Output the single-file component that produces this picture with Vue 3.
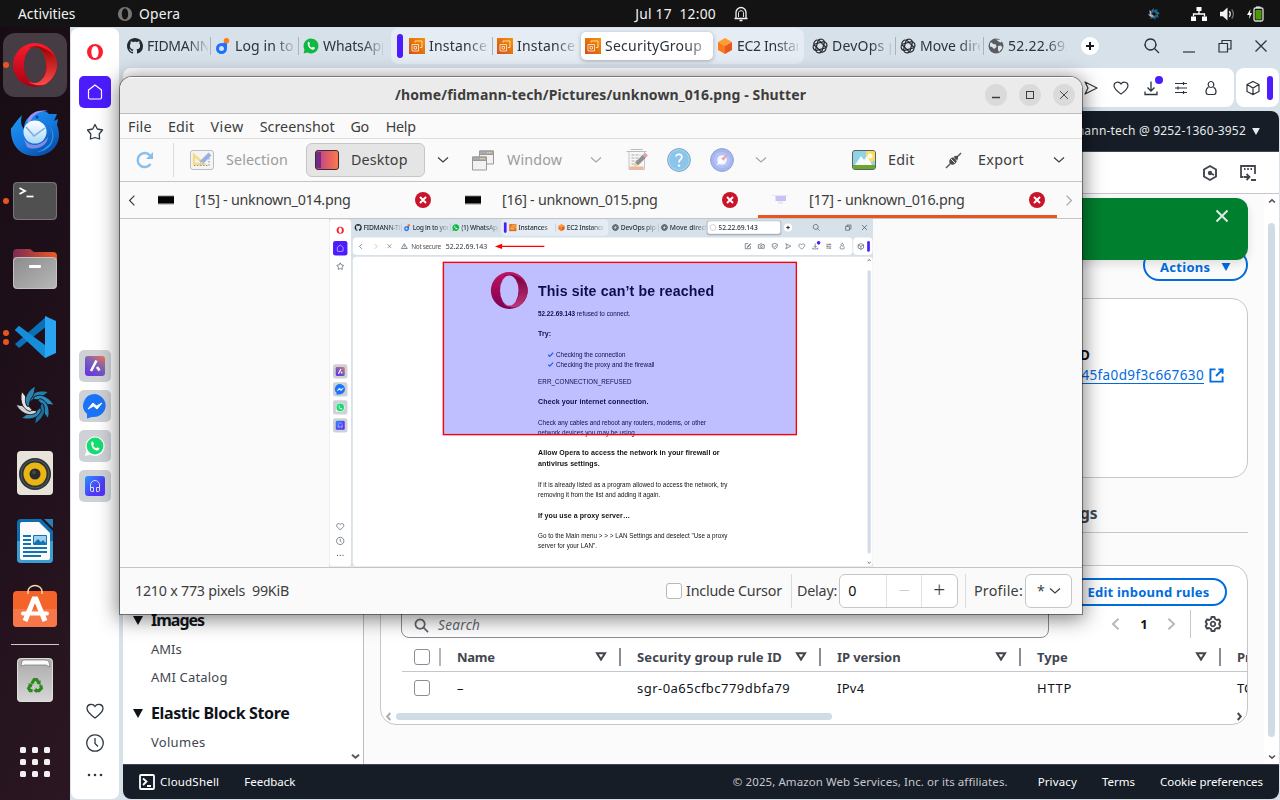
<script setup>
import { h } from 'vue'

// Adjusts tracking so a label occupies the given width in pixels.
const vFit = {
  mounted(el, { value }) {
    const n = el.textContent.trim().length
    el.style.letterSpacing = (value - el.offsetWidth) / n + 'px'
  }
}

const line = (d, w = 1.3, extra = '') =>
  `<path d="${d}" fill="none" stroke="currentColor" stroke-width="${w}" ${extra}/>`

const blade = 'M-8-6C-6-13 1-20 17-16.500C13-13.500 10.500-11 6.500-9.800C1-9-3-7.500-6-3.500Z'
const bladeFill = ['#1f81ad', '#2b8fbd', '#2385b2', '#1a6f9b', '#2e8ab4', '#cfd1d4', '#e2e3e5', '#2b83ad']
const blades = bladeFill.map((c, i) =>
  `<path d="${blade}" transform="translate(24 24) rotate(${i * 45}) scale(.88)" fill="${c}" stroke="#1c0f18" stroke-width="1.100"/>`).join('')

const petals = [0, 60, 120].map(a =>
  `<rect x="4.700" y="1" width="6.600" height="14" rx="3.300" transform="rotate(${a + 15} 8 8)" fill="none" stroke="#26282c" stroke-width="1.200"/>`).join('')

const icons = {
  operaBig: ['0 0 44 44', `<defs><linearGradient id="oa" x2="0" y2="1"><stop stop-color="#ff1b2d"/><stop offset="1" stop-color="#a70014"/></linearGradient><linearGradient id="ob" x2="0" y2="1"><stop stop-color="#9c0000"/><stop offset="1" stop-color="#ff4b4b"/></linearGradient></defs><circle cx="22" cy="22" r="22" fill="url(#oa)"/><path d="M14.7 5.8C17.8 3 24 2 30 5C40 9 44 15 44 22C44 29 40 36 33 41C26 44 18 41 14.7 38.2C22 42 34 38 34 22C34 7 22 1.500 14.700 5.800Z" fill="url(#ob)"/><ellipse cx="22" cy="22" rx="11" ry="18" fill="var(--hole,#463c44)"/>`],
  opera: ['0 0 18 18', '<path fill-rule="evenodd" fill="currentColor" d="M9 1a8 8 0 1 0 0 16A8 8 0 1 0 9 1ZM9 2.900C11.400 2.900 12.600 5.800 12.600 9S11.400 15.100 9 15.100S5.400 12.200 5.400 9S6.600 2.900 9 2.900Z"/>'],
  thunderbird: ['0 0 48 48', `<defs><linearGradient id="ta" x2="0.700" y2="1"><stop stop-color="#1f9bf5"/><stop offset=".6" stop-color="#1577dc"/><stop offset="1" stop-color="#0a4ea8"/></linearGradient><linearGradient id="tb" x2="0" y2="1"><stop stop-color="#fff"/><stop offset="1" stop-color="#a9d8fb"/></linearGradient></defs><path d="M11 6C3 14 1 20 0 19C-1 37 10 47 24 47C39 47 48 37 48 26C48 20 46 16 46 16L47 10L43 12L46 5L38 5C35 1 24 0 18 8C14 11 13 16 13 20C9 16 10 9 11 6Z" fill="url(#ta)"/><path d="M16 13C18 5 26 0 37 2C28 2 20 6 19 15Z" fill="#a58cf0"/><path d="M35 38C42 34 43 25 39 17C47 27 41 43 25 43C29 42 32 41 35 38Z" fill="#2b97ee"/><path d="M12 27C14 35 26 42 37 28C36 38 24 42 16 38Z" fill="#7d8de8"/><circle cx="24" cy="23" r="11.500" fill="url(#tb)"/><path d="M15 18L23 27L34 19" fill="none" stroke="#79a9df" stroke-width="1.500"/><circle cx="26" cy="8" r="1.500" fill="#0b3d91"/>`],
  terminal: ['0 0 44 38', '<rect width="44" height="38" rx="4" fill="#505050"/><rect x=".5" y=".5" width="43" height="37" rx="4" fill="none" stroke="#777"/><path d="M6.500 6L12 9L6.500 12" fill="none" stroke="#fff" stroke-width="1.800"/><path d="M13.500 14.500H20.500" stroke="#fff" stroke-width="1.700"/>'],
  files: ['0 0 44 40', '<defs><linearGradient id="fa"><stop stop-color="#7b2a55"/><stop offset="1" stop-color="#ef5a21"/></linearGradient><linearGradient id="fb" x2="1" y2="1"><stop stop-color="#8b8b8b"/><stop offset="1" stop-color="#b8b8b8"/></linearGradient></defs><path d="M0 4Q0 0 4 0H17L21 3H40Q44 3 44 7V20H0Z" fill="url(#fa)"/><rect y="8" width="44" height="32" rx="4" fill="url(#fb)"/><rect x=".5" y="8.500" width="43" height="31" rx="4" fill="none" stroke="#c2c2c2"/><rect x="16" y="16" width="12" height="3" rx="1" fill="#fff"/>'],
  vscode: ['0 0 42 42', '<path d="M1 14L5 10L33 32V42L1 14Z" fill="#1287d3"/><path d="M1 28L5 32L33 10V0L1 28Z" fill="#0b70b8"/><path d="M1 14L5 10L31 29V42L1 14Z" fill="#168dd8"/><path d="M31 0L42 5V37L31 42Z" fill="#29a5f3"/>'],
  shutter: ['0 0 48 48', blades],
  rhythm: ['0 0 36 44', '<rect width="36" height="44" rx="4" fill="#e7e3d8"/><circle cx="18" cy="23" r="16" fill="#2e3436"/><circle cx="18" cy="23" r="14" fill="none" stroke="#555b66"/><circle cx="18" cy="23" r="11.500" fill="#eab616"/><circle cx="18" cy="23" r="5.500" fill="#2a2b2d"/><circle cx="17" cy="21.500" r="2" fill="#45474a"/>'],
  writer: ['0 0 36 44', '<path d="M4 0H24L36 12V40Q36 44 32 44H4Q0 44 0 40V4Q0 0 4 0Z" fill="#0c6eae"/><path d="M0 22H36V40Q36 44 32 44H4Q0 44 0 40Z" fill="#3a9ed1"/><path d="M27 0H36V9Z" fill="#2780b8"/><path d="M5 3H22L33 14V39Q33 41 31 41H5Q3 41 3 39V5Q3 3 5 3Z" fill="#fbfbfb"/><path d="M6 17H14M6 21H14M6 25H14M6 29H30M6 33H30M6 37H24" stroke="#1473b5" stroke-width="1.800"/><rect x="16" y="16" width="14" height="10" rx="1" fill="#1473b5"/><path d="M17 24L21 20L24 23L26 21L29 24V17H17Z" fill="#9fd0ee"/>'],
  software: ['0 0 44 48', '<rect y="6" width="44" height="36" rx="4" fill="#f4632a"/><path d="M0 24H44V38Q44 42 40 42H4Q0 42 0 38Z" fill="#f6774a"/><path d="M12 36L21 14H23L32 36" fill="none" stroke="#fff" stroke-width="5"/><path d="M10 28.500H34" stroke="#fff" stroke-width="4" stroke-linecap="round"/><path d="M15 9V6.500A7 6 0 0 1 29 6.500V9" fill="none" stroke="#f3d9a4" stroke-width="1.500"/>'],
  trash: ['0 0 36 44', '<defs><linearGradient id="tr" x2="0" y2="1"><stop stop-color="#a9a9a9"/><stop offset="1" stop-color="#d7d7d7"/></linearGradient></defs><rect width="36" height="44" rx="4" fill="url(#tr)"/><rect x=".5" y=".5" width="35" height="43" rx="4" fill="none" stroke="#ddd"/><path d="M4 8L5 3Q6 2 8 2H28Q31 2 32 4L33 9L29 7H8Z" fill="#fafafa" stroke="#777" stroke-width=".7"/><g transform="translate(3.600 4.700) scale(.8)"><g fill="none" stroke="#2c8a1c" stroke-width="4"><path d="M14 26L17 21H20L23 25M25 28L26 32L23 35H19M15 35H12L10 32L12 28"/></g><path d="M25 22L25 28L20 26ZM20 31V38L16 35ZM9 26L15 26L14 31Z" fill="#2c8a1c"/></g>'],
  apps: ['0 0 30 30', [0, 12, 24].map(y => [0, 12, 24].map(x => `<rect x="${x}" y="${y}" width="6" height="6" rx="1.500" fill="#f3f0f2"/>`).join('')).join('')],
  home: ['0 0 32 32', '<rect width="32" height="32" rx="5" fill="#4c1cff"/><path d="M9.500 14L16 9L22.500 14V21.500Q22.500 23 21 23H11Q9.500 23 9.500 21.500Z" fill="none" stroke="#fff" stroke-width="1.200" stroke-linejoin="round"/>'],
  star: ['0 0 18 18', line('M9 1.500L11.300 6L16.500 7L13.200 11L13.600 16L9 14.500L4.400 16L4.800 11L1.500 7L6.700 6Z', 1.3, 'stroke-linejoin="round"')],
  heart: ['0 0 18 16', line('M9 15C3.500 11 1 8.500 1 5.500C1 1 7 0 9 3.500C11 0 17 1 17 5.500C17 8.500 14.500 11 9 15Z')],
  clock: ['0 0 18 18', line('M9 .8A8.200 8.200 0 1 1 8.990 .8M9 4V9.500L12 12.500')],
  dots: ['0 0 18 4', '<g fill="currentColor"><circle cx="3" cy="2" r="1.300"/><circle cx="9" cy="2" r="1.300"/><circle cx="15" cy="2" r="1.300"/></g>'],
  aria: ['0 0 32 32', '<defs><linearGradient id="ar" x1="1" x2="0.300" y2="1"><stop stop-color="#ff704d"/><stop offset=".5" stop-color="#7a62b8"/><stop offset="1" stop-color="#6a37e0"/></linearGradient></defs><rect width="32" height="32" rx="5" fill="#ced2d6"/><rect x="6" y="6" width="20" height="20" rx="3" fill="url(#ar)"/><path d="M12 21L17.500 10.500M18 17L20.500 20.500" stroke="#fff" stroke-width="2.600" fill="none"/>'],
  messenger: ['0 0 32 32', '<rect width="32" height="32" rx="5" fill="#ced2d6"/><path d="M16 4A12 11.500 0 1 1 13 27L8 28.500V24A12 11.500 0 0 1 16 4Z" fill="#1b74f7"/><path d="M9 19L14 13L17.500 16L23 13L18 19L14.500 16Z" fill="#fff" stroke="#fff"/>'],
  whatsappTile: ['0 0 32 32', '<rect width="32" height="32" rx="5" fill="#ced2d6"/><path d="M16 6.500A9.700 9.700 0 1 1 11 24.500L6 26L7.500 20.500A9.700 9.700 0 0 1 16 6.500Z" fill="#fff"/><circle cx="16" cy="16" r="8.400" fill="#17dc6f"/><path d="M12.200 12.500Q13 10.800 14.400 12.400L15 14L14 15.500Q15.200 17.800 17.300 18.300L18.500 17.200L20.500 18.400Q20 21 17 20.500Q12 18.500 12.200 12.500Z" fill="#fff"/>'],
  player: ['0 0 32 32', '<defs><linearGradient id="pl" x2="1" y2="1"><stop stop-color="#2794ff"/><stop offset=".6" stop-color="#4e3cf8"/><stop offset="1" stop-color="#5530f5"/></linearGradient></defs><rect width="32" height="32" rx="5" fill="#ced2d6"/><rect x="6" y="6" width="20" height="20" rx="3" fill="url(#pl)"/><path d="M11.500 20V15A4.500 4.500 0 0 1 20.500 15V20M14.500 17.500V21.500H12.500Q11.500 21.500 11.500 20V17.500ZM17.500 17.500V21.500H19.500Q20.500 21.500 20.500 20V17.500Z" fill="none" stroke="#d5dcff"/>'],
  github: ['0 0 16 16', '<path fill="#24292f" d="M8 0C3.580 0 0 3.580 0 8c0 3.540 2.290 6.530 5.470 7.590.4.070.55-.17.55-.38 0-.19-.01-.82-.01-1.490-2.010.37-2.530-.49-2.690-.94-.09-.23-.48-.94-.82-1.130-.28-.15-.68-.52-.01-.53.63-.01 1.080.58 1.230.82.720 1.210 1.870.87 2.330.66.070-.52.280-.87.510-1.070-1.780-.2-3.640-.89-3.640-3.950 0-.87.310-1.590.82-2.150-.08-.2-.36-1.020.08-2.120 0 0 .67-.21 2.200.82.640-.18 1.320-.27 2-.27s1.360.09 2 .27c1.530-1.040 2.200-.82 2.200-.82.44 1.100.16 1.920.08 2.120.51.560.82 1.270.82 2.150 0 3.070-1.870 3.750-3.650 3.950.29.250.54.730.54 1.480 0 1.070-.01 1.930-.01 2.200 0 .21.15.46.55.38A8.010 8.010 0 0 0 16 8c0-4.420-3.580-8-8-8z"/>'],
  docean: ['0 0 16 16', '<circle cx="6.500" cy="10.500" r="4" fill="none" stroke="#1f6fff" stroke-width="3"/><path d="M8 5L12 3.500V10H9Z" fill="#1f6fff"/><circle cx="11.500" cy="2.700" r="2.700" fill="#ff7a1a"/>'],
  whatsapp: ['0 0 16 16', '<path d="M8 .5A7.500 7.500 0 1 1 4.500 14.600L.5 15.500L1.500 11.700A7.500 7.500 0 0 1 8 .5Z" fill="#0eb842"/><path d="M4.600 4.800Q5.600 3 6.600 4.700L7 6L6.200 7Q7 9 9 9.700L10 8.700L12 9.700Q11.500 12.200 9 11.700Q4.700 10 4.600 4.800Z" fill="#fff"/>'],
  ec2: ['0 0 16 16', '<defs><linearGradient id="ec" x1="0" y1="1" x2="1" y2="0"><stop stop-color="#cf511f"/><stop offset="1" stop-color="#f79400"/></linearGradient></defs><rect width="16" height="16" fill="url(#ec)"/><path d="M3 6.500H9.500V13H3ZM6 4.500V3H13V9.500H11M5 8.500H7.500V11H5Z" fill="none" stroke="#ffe3bd" stroke-width=".9"/>'],
  cubeOrange: ['0 0 16 16', '<path d="M8 0L15 4L8 8L1 4Z" fill="#ff9d2e"/><path d="M1 4L8 8V16L1 12Z" fill="#fb7a1c"/><path d="M15 4L8 8V16L15 12Z" fill="#e9571f"/>'],
  openai: ['0 0 16 16', petals],
  globe: ['0 0 16 16', '<circle cx="8" cy="8" r="7.500" fill="#5a5d60"/><path d="M2 5Q4 3.500 5 6L8 6.500L8.500 9L6 11L4 9L2 8.500ZM8 1.500L10 3L12 4.500L14 4L13 2ZM10 8L13 7.500L14.500 10L11 14L10 12Z" fill="#dce5ec"/>'],
  spinner: ['0 0 16 16', '<circle cx="8" cy="8" r="6.500" fill="none" stroke="#c9ccd1" stroke-width="2"/>'],
  plus: ['0 0 18 18', '<circle cx="9" cy="9" r="9" fill="#fff"/><path d="M9 5V13M5 9H13" stroke="#16191d" stroke-width="2"/>'],
  search: ['0 0 16 16', line('M6.500 1A5.500 5.500 0 1 1 6.490 1M10.500 10.500L15 15')],
  searchBold: ['0 0 16 16', line('M6.500 1.500A5 5 0 1 1 6.490 1.500M10.300 10.300L15 15', 1.9)],
  min: ['0 0 14 14', line('M1 13H13', 1.2)],
  minus: ['0 0 10 10', line('M1 7.500H9', 1.3)],
  restore: ['0 0 14 14', line('M1 4.500H9.500V13H1ZM4 4.500V1.500H13V10H9.500', 1.2)],
  close: ['0 0 14 14', line('M1.500 1.500L12.500 12.500M12.500 1.500L1.500 12.500', 1.3)],
  closeBold: ['0 0 14 14', line('M1.500 1.500L12.500 12.500M12.500 1.500L1.500 12.500', 2)],
  send: ['0 0 16 16', line('M2 2L14 8L2 14L5 8Z', 1.2, 'stroke-linejoin="round"')],
  download: ['0 0 16 16', line('M8 1.500V10.500M4.500 7.500L8 11L11.500 7.500M2 11.500V14.500H14V11.500')],
  sliders: ['0 0 16 16', line('M2 3.500H14M2 8H14M2 12.500H14M10.500 2V5M5 6.500V9.500M10.500 11V14', 1.2)],
  person: ['0 0 16 16', line('M8 1.500A2.800 3 0 1 1 7.990 1.500M5.500 7.200C2 9 2.500 14.500 5 14.500H11C13.500 14.500 14 9 10.500 7.200', 1.2)],
  cube: ['0 0 16 16', line('M8 1.500L14 4.500V11.500L8 14.500L2 11.500V4.500ZM2 4.500L8 8L14 4.500M8 8V14.500', 1.2)],
  edit: ['0 0 16 16', line('M9 2H2V14H14V8M6 10L14 2L15 4L7 11Z')],
  camera: ['0 0 16 16', line('M1 4.500H4.500L6 2.500H10L11.500 4.500H15V13H1ZM8 6A2.500 2.500 0 1 1 7.990 6')],
  shield: ['0 0 16 16', line('M8 1.500L14 3.500V8Q13 12.500 8 14.500Q3 12.500 2 8V3.500ZM5 8L7.500 10L11 6')],
  warn: ['0 0 16 16', line('M8 2L15 13.500H1ZM8 6V9.500M8 11V12.500')],
  left: ['0 0 10 16', line('M8 2L2 8L8 14', 1.5)],
  right: ['0 0 10 16', line('M2 2L8 8L2 14', 1.5)],
  leftBold: ['0 0 10 16', line('M8.500 2L2 8L8.500 14', 2)],
  rightBold: ['0 0 10 16', line('M1.500 2L8 8L1.500 14', 2)],
  down: ['0 0 12 8', line('M1 1.500L6 6L11 1.500', 1.2)],
  caretDown: ['0 0 10 8', line('M1 2L5 5.500L9 2', 2.2)],
  tri: ['0 0 10 9', '<path d="M0 0H10L5 9Z" fill="currentColor"/>'],
  filter: ['0 0 12 10', line('M2 1.200H10L6 7.600Z', 2)],
  bell: ['0 0 14 16', line('M2 12V6.500A5 5 0 0 1 12 6.500V12M.5 12.500H13.500M5.500 14.500H8.500', 1.3) + line('M4.500 11V6.500A2.600 2.600 0 0 1 9.500 6.500V11', .9)],
  network: ['0 0 16 14', '<path d="M5.500 0H10.500V4H5.500ZM0 9.500H5V14H0ZM11 9.500H16V14H11Z" fill="#fff"/><path d="M8 4V7M2.500 9.500V7H13.500V9.500" fill="none" stroke="#fff" stroke-width="1.300"/>'],
  volume: ['0 0 16 14', '<path d="M0 4.500H3L8 0V14L3 9.500H0Z" fill="#f2f2f2"/><path d="M10 4Q12 7 10 10" fill="none" stroke="#eee" stroke-width="1.300"/><path d="M12.500 2Q16 7 12.500 12" fill="none" stroke="#777" stroke-width="1.300"/>'],
  battery: ['0 0 17 16', '<path d="M3.500 3L0 9H2.500L2 13L5 7H3Z" fill="#fff"/><path d="M9 2V.5H13.500V2" fill="#fff"/><rect x="7" y="2" width="9" height="13" rx="1.500" fill="none" stroke="#ddd" stroke-width="1.300"/><rect x="8.500" y="4" width="6" height="9.500" fill="#4e9a06"/>'],
  hex: ['0 0 16 16', line('M8 1L14 4.500V11.500L8 15L2 11.500V4.500Z', 1.9) + '<circle cx="8" cy="8" r="2.200" fill="currentColor"/>' + line('M8 8L12 10', 1.6)],
  console: ['0 0 16 16', line('M3 12H1V1H15V9M4 4H5.500M7.200 4H8.800M10.500 4H12M3.500 12H9M6.500 9L9.500 12L6.500 15M11 15H16', 1.8)],
  external: ['0 0 16 16', line('M7 1.500H1.500V14.500H14.500V9M10 1.500H14.500V6M14.500 1.500L7.500 8.500', 2)],
  gear: ['0 0 16 16', line('M6.500 1H9.500L10 3L12 4L14 3.500L15.300 6L14 8L15.300 10L14 12.500L12 12L10 13L9.500 15H6.500L6 13L4 12L2 12.500L.7 10L2 8L.7 6L2 3.500L4 4L6 3Z', 1.9, 'stroke-linejoin="round"') + line('M8 5.700A2.300 2.300 0 1 1 7.990 5.700', 1.8)],
  shell: ['0 0 16 16', '<rect x="1" y="1" width="14" height="14" rx="1" fill="none" stroke="#fff" stroke-width="1.800"/>' + line('M4 4.500L7.500 7.500L4 11M8 12H12', 1.8)],
  refresh: ['0 0 18 18', '<path d="M14.500 13A7 7 0 1 1 14 4.500" fill="none" stroke="#8bbfe8" stroke-width="2.500"/><path d="M17 1V8H10Z" fill="#8bbfe8"/>'],
  selection: ['0 0 24 20', '<rect x=".5" y=".5" width="23" height="19" rx="2.500" fill="#f4f4f4" stroke="#bdbdbd"/><path d="M4 5V14L14 14Z" fill="none" stroke="#f3dc86" stroke-width="2.500"/><path d="M4 15.500H19V8" stroke="#777" stroke-dasharray="1.500 1.500" fill="none" stroke-width=".8"/><path d="M11 13L20 4" stroke="#9aaeea" stroke-width="4"/><path d="M8 16.500L12 11L13.500 13Z" fill="#edc9a8"/>'],
  desktop: ['0 0 24 20', '<defs><linearGradient id="dk"><stop stop-color="#b83991"/><stop offset="1" stop-color="#ff7b4a"/></linearGradient></defs><rect x=".5" y=".5" width="23" height="19" rx="2.500" fill="url(#dk)" stroke="#3c2b3a"/><path d="M1 2H6V18H1Z" fill="#722c80"/>'],
  windows: ['0 0 22 20', '<g stroke="#999"><path d="M7.500 .5H21.500V13.500H7.500Z" fill="#f2f2f2"/><path d="M7.500 .5H21.500V4H7.500Z" fill="#aaa"/><path d="M.5 6.500H14.500V19.500H.5Z" fill="#f2f2f2"/><path d="M.5 6.500H14.500V10H.5Z" fill="#aaa"/></g><path d="M15 2.200H20M8 8.200H13" stroke="#f5d69a" stroke-dasharray="1.500 .6"/>'],
  notes: ['0 0 24 24', '<path d="M3.500 3.500H19V21.500H3.500Z" fill="#f7f7f7" stroke="#c6c6c6"/><path d="M1 3.500H21M5 1.500H17" stroke="#bbb"/><path d="M6 7H15M6 10H13M6 13H13M6 16H11" stroke="#aaa" stroke-dasharray="3 1"/><path d="M4 18.500H18V21H4Z" fill="#f9b592"/><path d="M11 16L19 8" stroke="#909090" stroke-width="4.200"/><path d="M18.500 8.500L21 6" stroke="#dfa4bd" stroke-width="4.200"/><path d="M8 19L9.500 15L12.500 17.500Z" fill="#efd29d"/>'],
  help: ['0 0 24 24', '<circle cx="12" cy="12" r="11.400" fill="#8cc5ea" stroke="#7aa4c2"/><circle cx="12" cy="12" r="10.300" fill="none" stroke="#a9d8f4"/><path d="M9 8.500C9.300 5.500 15.200 5.500 14.900 9C14.700 11.500 12 11.500 12 14.500" fill="none" stroke="#fff" stroke-width="1.700"/><circle cx="12" cy="17.600" r="1.200" fill="#fff"/>'],
  compass: ['0 0 24 24', '<circle cx="12" cy="12" r="11.400" fill="#a5b7f1" stroke="#93a0d0"/><circle cx="12" cy="12" r="8" fill="#b4c3f5"/><circle cx="12" cy="12" r="4.800" fill="#f4f5fb"/><path d="M6.500 17.500L10.500 10.500L13.500 13.500Z" fill="#fff"/><path d="M19 5L13.500 12.500L11.500 10.500Z" fill="#ee9aa0"/>'],
  picture: ['0 0 24 20', '<rect x=".5" y=".5" width="23" height="19" rx="2.500" fill="#8fd3e4" stroke="#59635f"/><path d="M14 1H21Q23 1 23 3V10L14 16Z" fill="#fdda62"/><circle cx="18" cy="6" r="2.500" fill="#fffbe4"/><path d="M3 15L9 6L12 10L15 6L20 15Z" fill="#f7fbfd"/><path d="M1 15H23V18Q23 19 22 19H2Q1 19 1 18Z" fill="#6da62c"/>'],
  plug: ['0 0 18 18', '<path d="M1 17L17 1" stroke="#5c5c5c" stroke-width="1.600"/><path d="M4.500 11Q4 7 8.500 5.500L12.500 9.500Q11 14 7 13.500Z" fill="#4c4c4c"/><path d="M6 7L11 12" stroke="#fafafa" stroke-width="1"/><path d="M9 5Q12 3.500 13.500 4.500Q14.500 6 13 9Z" fill="#4c4c4c"/>'],
  redx: ['0 0 16 16', '<circle cx="8" cy="8" r="8" fill="#c7162b"/><path d="M5 5L11 11M11 5L5 11" stroke="#fff" stroke-width="2"/>'],
  thumbDark: ['0 0 16 10', '<path d="M0 0H16V10H0Z" fill="#c9c9c9"/><path d="M0 1.200H16V8.600H0Z" fill="#050505"/>'],
  thumbLight: ['0 0 16 10', '<path d="M0 0H16V1H0Z" fill="#e3e8f2"/><path d="M3.500 1H14V6H3.500Z" fill="#c6c2f5"/><path d="M6 6H11V9H6Z" fill="#e9e9ee"/>'],
  check: ['0 0 14 12', '<path d="M1.500 6L5 9.500L12.500 1.500" fill="none" stroke="#1b7cf2" stroke-width="2.600"/>'],
  arrow: ['0 0 110 12', '<path d="M12 6H110" stroke="#f00" stroke-width="3"/><path d="M0 6L16 0V12Z" fill="#f00"/>']
}
const Ico = p => h('svg', { viewBox: icons[p.n][0], width: p.w, height: p.h || p.w, innerHTML: icons[p.n][1], class: 'ico' })
Ico.props = ['n', 'w', 'h']

const dock = [
  { n: 'operaBig', w: 44, h: 44, run: 1, active: true }, { n: 'thunderbird', w: 48, h: 48, run: 0 },
  { n: 'terminal', w: 44, h: 38, run: 1 }, { n: 'files', w: 44, h: 40, run: 0 },
  { n: 'vscode', w: 42, h: 42, run: 2 }, { n: 'shutter', w: 44, h: 44, run: 0 },
  { n: 'rhythm', w: 36, h: 44, run: 0 }, { n: 'writer', w: 36, h: 44, run: 0 },
  { n: 'software', w: 44, h: 48, run: 0 }
]
const apps = ['aria', 'messenger', 'whatsappTile', 'player']

const strips = {
  full: [
    [{ i: 'github', t: 'FIDMANN', w: 88, tw: 63, sep: true, cut: 61 }, { i: 'docean', t: 'Log in to', w: 88, tw: 58, sep: true, cut: 60 }, { i: 'whatsapp', t: 'WhatsApp', w: 88, tw: 66, cut: 60 }],
    [{ i: 'ec2', t: 'Instances', w: 88, tw: 65, sep: true, cut: 59 }, { i: 'ec2', t: 'Instances', w: 88, tw: 65, cut: 59 }, { i: 'ec2', t: 'SecurityGroup', w: 132, tw: 97, on: true, cut: 100 }, { i: 'cubeOrange', t: 'EC2 Instan', w: 88, tw: 67, cut: 61 }],
    [{ i: 'openai', t: 'DevOps pi', w: 88, tw: 69, sep: true, cut: 59 }, { i: 'openai', t: 'Move dire', w: 88, tw: 65, sep: true, cut: 60 }, { i: 'globe', t: '52.22.69.', w: 89, tw: 61, cut: 59 }]
  ],
  mini: [
    [{ i: 'github', t: 'FIDMANN-TE', w: 109, tw: 85, sep: true, cut: 82 }, { i: 'docean', t: 'Log in to you', w: 108, tw: 84, sep: true, cut: 80 }, { i: 'whatsapp', t: '(1) WhatsApp', w: 108, tw: 88, cut: 82 }],
    [{ i: 'ec2', t: 'Instances', w: 108, tw: 65, sep: true, cut: 80 }, { i: 'cubeOrange', t: 'EC2 Instance', w: 113, tw: 84, cut: 82 }],
    [{ i: 'openai', t: 'DevOps pipe', w: 109, tw: 86, sep: true, cut: 80 }, { i: 'openai', t: 'Move direct', w: 107, tw: 84, cut: 82 }, { i: 'spinner', t: '52.22.69.143', w: 162, tw: 87, on: true, cut: 130 }]
  ]
}

const menus = [['File', 24, 16], ['Edit', 27, 16], ['View', 33, 16], ['Screenshot', 75, 16], ['Go', 18, 17], ['Help', 30, 0]]
const shots = [
  { t: '[15] - unknown_014.png', i: 'thumbDark' },
  { t: '[16] - unknown_015.png', i: 'thumbDark' },
  { t: '[17] - unknown_016.png', i: 'thumbLight', on: true }
]
const cols = [['Name', 38, '–', 7], ['Security group rule ID', 145, 'sgr-0a65cfbc779dbfa79', 153], ['IP version', 64, 'IPv4', 27], ['Type', 31, 'HTTP', 35]]
</script>

<template>
  <div class="desktop">
    <header class="topbar">
      <span v-fit="63" class="act">Activities</span>
      <Ico n="opera" w="16" class="grey" />
      <span v-fit="41">Opera</span>
      <span v-fit="81" class="date">Jul 17&nbsp; 12:00</span>
      <Ico n="bell" w="14" h="16" />
      <div class="tray">
        <Ico n="shutter" w="14" /><Ico n="network" w="16" h="14" /><Ico n="volume" w="15" h="14" /><Ico n="battery" w="17" h="16" />
      </div>
    </header>

    <div class="work">
      <aside class="dock">
        <div v-for="d in dock" :key="d.n" class="slot" :class="{ active: d.active }">
          <div class="runs"><i v-for="r in d.run" :key="r"></i></div>
          <Ico :n="d.n" :w="d.w" :h="d.h" />
        </div>
        <hr>
        <div class="slot"><Ico n="trash" w="36" h="44" /></div>
        <div class="slot grid9"><Ico n="apps" w="30" /></div>
      </aside>

      <div class="browser">
        <nav class="side">
          <Ico n="opera" w="18" class="red" /><Ico n="home" w="32" class="house" /><Ico n="star" w="18" />
          <div class="pins"><Ico v-for="a in apps" :key="a" :n="a" w="32" /></div>
          <Ico n="heart" w="18" h="16" /><Ico n="clock" w="18" class="clk" /><Ico n="dots" w="18" h="4" />
        </nav>
        <div class="main">
          <div class="strip">
            <div v-for="(g, gi) in strips.full" :key="gi" class="tabs" :class="{ group: gi === 1 }">
              <b v-if="gi === 1" class="bar"></b>
              <div v-for="(t, ti) in g" :key="ti" class="tab" :class="{ on: t.on, sep: t.sep }" :style="{ width: t.w + 'px' }">
                <Ico :n="t.i" w="16" />
                <div class="cut" :style="{ width: t.cut + 'px' }"><span v-fit="t.tw">{{ t.t }}</span></div>
              </div>
            </div>
            <Ico n="plus" w="18" class="plus" />
            <div class="wm"><Ico n="search" w="16" /><Ico n="min" w="14" /><Ico n="restore" w="14" /><Ico n="close" w="14" /></div>
          </div>
          <div class="tools">
            <div class="card1"><Ico n="send" w="16" /><Ico n="heart" w="16" h="14" /><div class="dl"><Ico n="download" w="16" /></div><Ico n="sliders" w="16" /><Ico n="person" w="16" /></div>
            <div class="card2"><Ico n="cube" w="16" /><b class="bar"></b></div>
          </div>
          <div class="page">
            <div class="awshead"><span v-fit="173">mann-tech @ 9252-1360-3952</span><Ico n="tri" w="8" h="7" /></div>
            <div class="crumb"><Ico n="hex" w="16" /><Ico n="console" w="16" /></div>
            <div class="body">
              <div class="leftnav">
                <div class="sec"><Ico n="tri" w="10" h="9" /><span v-fit="53">Images</span></div>
                <div class="item"><span v-fit="31">AMIs</span></div>
                <div class="item"><span v-fit="77">AMI Catalog</span></div>
                <div class="sec gap"><Ico n="tri" w="10" h="9" /><span v-fit="138">Elastic Block Store</span></div>
                <div class="item"><span v-fit="55">Volumes</span></div>
                <Ico n="caretDown" w="9" h="7" class="navdown" />
              </div>
              <div class="content">
                <div class="flash"><Ico n="closeBold" w="14" /></div>
                <div class="actions"><span v-fit="50">Actions</span><Ico n="tri" w="10" h="8" /></div>
                <div class="details">
                  <b class="lbl">Security group ID</b>
                  <div class="link"><u v-fit="123">45fa0d9f3c667630</u><Ico n="external" w="15" /></div>
                </div>
                <div class="ttabs"><b>Tags</b></div>
                <div class="rules">
                  <div class="rhead"><span class="pill"><span v-fit="122">Edit inbound rules</span></span></div>
                  <div class="rsearch">
                    <div class="box"><Ico n="searchBold" w="15" /><i v-fit="42">Search</i></div>
                    <div class="pager"><Ico n="leftBold" w="9" h="14" /><b>1</b><Ico n="rightBold" w="9" h="14" /><s></s><Ico n="gear" w="16" class="gear" /></div>
                  </div>
                  <div class="row th">
                    <div class="ck"><em></em></div>
                    <div v-for="c in cols" :key="c[0]" class="cell"><span v-fit="c[1]">{{ c[0] }}</span><Ico n="filter" w="12" h="10" /></div>
                    <div class="cell"><span>Protocol</span></div>
                  </div>
                  <div class="row td">
                    <div class="ck"><em></em></div>
                    <div v-for="c in cols" :key="c[0]" class="cell"><span v-fit="c[3]">{{ c[2] }}</span></div>
                    <div class="cell"><span>TCP</span></div>
                  </div>
                  <div class="hscroll"><Ico n="caretDown" w="9" h="7" class="l" /><b></b><Ico n="caretDown" w="9" h="7" class="r" /></div>
                </div>
              </div>
              <div class="vscroll"><Ico n="caretDown" w="8" h="6" class="up" /><b></b><Ico n="caretDown" w="8" h="6" /></div>
            </div>
            <footer class="foot">
              <Ico n="shell" w="16" /><span v-fit="59">CloudShell</span><span v-fit="51" class="fb">Feedback</span>
              <span v-fit="275" class="copy">© 2025, Amazon Web Services, Inc. or its affiliates.</span>
              <span v-fit="39">Privacy</span><span v-fit="33">Terms</span><span v-fit="103">Cookie preferences</span>
            </footer>
          </div>
        </div>
      </div>
    </div>

    <section class="shutter">
      <div class="title">
        <b v-fit="411">/home/fidmann-tech/Pictures/unknown_016.png - Shutter</b>
        <div class="wbtns"><i><Ico n="minus" w="10" /></i><i><em></em></i><i><Ico n="close" w="10" /></i></div>
      </div>
      <div class="menu"><span v-for="m in menus" :key="m[0]" v-fit="m[1]" :style="{ marginRight: m[2] + 'px' }">{{ m[0] }}</span></div>
      <div class="bar2">
        <div class="mid refresh"><Ico n="refresh" w="18" /></div>
        <div class="tb sel"><Ico n="selection" w="24" h="20" /><span v-fit="62">Selection</span></div>
        <div class="tb desk"><Ico n="desktop" w="24" h="20" /><span v-fit="57">Desktop</span></div>
        <div class="mid"><Ico n="down" w="12" h="8" /></div>
        <div class="tb win"><Ico n="windows" w="22" h="21" /><span v-fit="55">Window</span></div>
        <div class="mid dim"><Ico n="down" w="12" h="8" /></div>
        <div class="mid"><Ico n="notes" w="25" h="24" /></div>
        <div class="mid"><Ico n="help" w="24" /></div>
        <div class="mid"><Ico n="compass" w="24" /></div>
        <div class="mid dim"><Ico n="down" w="12" h="8" /></div>
        <div></div>
        <div class="tb"><Ico n="picture" w="24" h="20" /><span v-fit="27">Edit</span></div>
        <div class="tb exp"><Ico n="plug" w="17" /><span v-fit="46">Export</span></div>
        <div class="mid"><Ico n="down" w="12" h="8" /></div>
      </div>
      <div class="stabs">
        <div class="mid nav"><Ico n="left" w="8" h="13" /></div>
        <div v-for="s in shots" :key="s.t" class="stab" :class="{ on: s.on }">
          <Ico :n="s.i" w="16" h="10" /><span v-fit="156">{{ s.t }}</span><Ico n="redx" w="16" class="x" />
        </div>
        <div class="mid nav dim"><Ico n="right" w="8" h="13" /></div>
      </div>
      <div class="canvas">
        <div class="frame">
          <div class="mini">
            <nav class="side">
              <Ico n="opera" w="18" class="red" /><Ico n="home" w="32" class="house" /><Ico n="star" w="18" />
              <div class="pins"><Ico v-for="a in apps" :key="a" :n="a" w="32" /></div>
              <Ico n="heart" w="18" h="16" /><Ico n="clock" w="18" class="clk" /><Ico n="dots" w="18" h="4" />
            </nav>
            <div class="main">
              <div class="strip">
                <div v-for="(g, gi) in strips.mini" :key="gi" class="tabs" :class="{ group: gi === 1 }">
                  <b v-if="gi === 1" class="bar"></b>
                  <div v-for="(t, ti) in g" :key="ti" class="tab" :class="{ on: t.on, sep: t.sep }" :style="{ width: t.w + 'px' }">
                    <Ico :n="t.i" w="16" />
                    <div class="cut" :style="{ width: t.cut + 'px' }"><span v-fit="t.tw">{{ t.t }}</span></div>
                  </div>
                </div>
                <Ico n="plus" w="18" class="plus" />
                <div class="wm"><Ico n="search" w="16" /><Ico n="restore" w="14" class="rs" /><Ico n="close" w="14" /></div>
              </div>
              <div class="tools">
                <div class="card1 addr">
                  <Ico n="left" w="9" h="14" /><Ico n="right" w="9" h="14" class="dim" /><Ico n="close" w="11" />
                  <Ico n="warn" w="15" class="wr" /><span v-fit="66" class="ns">Not secure</span><span v-fit="92" class="ip">52.22.69.143</span>
                  <Ico n="arrow" w="110" h="12" class="arr" />
                  <Ico n="edit" w="15" /><Ico n="camera" w="15" /><Ico n="shield" w="15" /><Ico n="send" w="15" /><Ico n="heart" w="15" h="14" /><div class="dl"><Ico n="download" w="15" /></div><Ico n="sliders" w="15" /><Ico n="person" w="15" />
                </div>
                <div class="card2"><Ico n="cube" w="16" /><b class="bar"></b></div>
              </div>
              <div class="err">
                <Ico n="operaBig" w="82" class="elogo" />
                <div class="etext">
                  <h1 v-fit="392">This site can’t be reached</h1>
                  <p><span v-fit="206"><b>52.22.69.143</b> refused to connect.</span></p>
                  <p class="m"><b class="k" v-fit="29">Try:</b></p>
                  <p class="m li"><Ico n="check" w="14" h="12" /><span v-fit="154">Checking the connection</span></p>
                  <p class="li"><Ico n="check" w="14" h="12" /><span v-fit="219">Checking the proxy and the firewall</span></p>
                  <p class="s"><span v-fit="208">ERR_CONNECTION_REFUSED</span></p>
                  <p class="m"><b class="k" v-fit="246">Check your internet connection.</b></p>
                  <p class="m"><span v-fit="374">Check any cables and reboot any routers, modems, or other</span></p>
                  <p><span v-fit="215">network devices you may be using</span></p>
                  <p class="m"><b class="k" v-fit="404">Allow Opera to access the network in your firewall or</b></p>
                  <p class="t"><b class="k" v-fit="137">antivirus settings.</b></p>
                  <p class="m"><span v-fit="421">If it is already listed as a program allowed to access the network, try</span></p>
                  <p><span v-fit="272">removing it from the list and adding it again.</span></p>
                  <p class="m"><b class="k" v-fit="205">If you use a proxy server…</b></p>
                  <p class="m"><span v-fit="421">Go to the Main menu &gt; &gt; &gt; LAN Settings and deselect "Use a proxy</span></p>
                  <p><span v-fit="131">server for your LAN".</span></p>
                </div>
                <div class="vscroll"><Ico n="caretDown" w="9" h="7" class="up" /><b></b><Ico n="caretDown" w="9" h="7" /></div>
              </div>
            </div>
            <div class="mark"></div>
          </div>
        </div>
      </div>
      <div class="status">
        <span v-fit="154">1210 x 773 pixels&nbsp; 99KiB</span>
        <em class="cb"></em><span v-fit="96" class="inc">Include Cursor</span>
        <div class="grp d1"><span v-fit="40">Delay:</span><div class="spin"><span>0</span><u>−</u><u class="pl">+</u></div></div>
        <div class="grp d2"><span v-fit="49">Profile:</span><div class="pick"><span>*</span><Ico n="down" w="12" h="8" /></div></div>
      </div>
    </section>
  </div>
</template>

<style>
html, body { margin: 0; overflow: hidden; }
</style>

<style scoped>
* { box-sizing: border-box; }
.ico { display: block; flex: none; overflow: visible; }
span, b, i, u { white-space: nowrap; }
.desktop { position: relative; width: 1280px; height: 800px; overflow: hidden; background: #1c0f18; font: 14.300px/20px "Noto Sans", "Open Sans", sans-serif; color: #3d3d3d; display: flex; flex-direction: column; }
.topbar { height: 27px; flex: none; background: #131313; color: #f2f2f2; display: flex; align-items: center; padding: 0 16px 0 18px; font-size: 13.800px; }
.topbar span { flex: none; }
.topbar .grey { color: #777; margin: 0 6px 0 36px; }
.act { display: inline-block; width: 63px; }
.date { margin-left: 455px; margin-right: 18px; }
.tray { margin-left: auto; display: flex; align-items: center; }
.tray .ico:nth-child(1) { margin-right: 30px; }
.tray .ico:nth-child(2) { margin-right: 13px; }
.tray .ico:nth-child(3) { margin-right: 12px; }
.work { flex: 1; display: flex; min-height: 0; isolation: isolate; }
.dock { width: 70px; flex: none; padding-top: 4px; background: linear-gradient(115deg, #170c14 0%, #21111c 55%, #2b1722 100%); display: flex; flex-direction: column; }
.slot { height: 68px; flex: none; display: flex; align-items: center; justify-content: center; position: relative; }
.slot.active::before { content: ""; position: absolute; inset: 2px 3px; border-radius: 12px; background: #463c44; }
.slot .ico { position: relative; }
.runs { position: absolute; left: 3px; top: 0; height: 68px; display: flex; flex-direction: column; justify-content: center; gap: 3px; z-index: 1; }
.runs i { width: 6px; height: 6px; border-radius: 3px; background: #e95420; }
.dock hr { width: 48px; margin: 1px auto; border: 0; height: 1px; background: #cfcacd; flex: none; }
.grid9 { margin-top: 14px; }

.browser, .mini { background: #d7e1ea; display: flex; }
.browser { flex: 1; padding-left: 1px; min-width: 0; }
.side { width: 48px; flex: none; margin: 1px 4px 1px 0; background: #fff; border-radius: 7px; display: flex; flex-direction: column; align-items: center; color: #2f3842; }
.side > .ico:nth-child(1) { margin-top: 15px; }
.side .red { color: #fa1e2e; }
.side .house { margin: 15px 0; }
.pins { margin-top: 209px; margin-bottom: auto; display: flex; flex-direction: column; gap: 8px; }
.side .clk { margin: 15px 0 21px; }
.side > .ico:last-child { margin-bottom: 22px; }
.main { flex: 1; min-width: 0; display: flex; flex-direction: column; color: #2c333a; }
.strip { height: 41px; flex: none; display: flex; padding-top: 1px; }
.tabs { display: flex; height: 36px; align-items: center; flex: none; }
.group { background: #e5ecf3; border-radius: 8px; margin: 0 4px; padding: 0 3px 0 6px; }
.bar { display: block; width: 6px; height: 24px; border-radius: 3px; background: #4c1cff; margin-right: 2px; flex: none; }
.tab { height: 28px; flex: none; display: flex; align-items: center; padding-left: 4px; position: relative; font-size: 14px; }
.tab.sep::after { content: ""; position: absolute; right: 0; top: 5px; width: 1px; height: 18px; background: #aab3bc; }
.tab.on { background: #fff; border-radius: 5px; box-shadow: 0 1px 4px rgba(40, 50, 70, .35); }
.cut { margin-left: 4px; overflow: hidden; -webkit-mask-image: linear-gradient(90deg, #000 65%, transparent 105%); mask-image: linear-gradient(90deg, #000 65%, transparent 105%); }
.tab.on .cut { -webkit-mask-image: linear-gradient(90deg, #000 80%, rgba(0,0,0,.35)); mask-image: linear-gradient(90deg, #000 80%, rgba(0,0,0,.35)); }
.cut span { display: inline-block; }
.plus { margin: 9px 0 0 8px; }
.wm { margin-left: auto; display: flex; align-items: center; gap: 22px; height: 36px; padding-right: 12px; }
.tools { height: 39px; flex: none; display: flex; gap: 2px; padding-right: 1px; }
.card1 { flex: 1; background: #fff; border-radius: 8px; display: flex; align-items: center; justify-content: flex-end; gap: 14px; padding-right: 15px; }
.card2 { width: 43px; background: #fff; border-radius: 8px; display: flex; align-items: center; padding-left: 9px; gap: 6px; }
.dl { position: relative; flex: none; }
.dl::after { content: ""; position: absolute; right: -4px; top: -4px; width: 8px; height: 8px; border-radius: 4px; background: #4c1cff; }
.page { flex: 1; margin: 4px 1px 1px 0; border-radius: 8px; overflow: hidden; background: #fff; display: flex; flex-direction: column; min-height: 0; }
.awshead { height: 41px; flex: none; background: #161d26; color: #e8eaed; font-size: 12px; display: flex; align-items: center; justify-content: flex-end; gap: 6px; padding-right: 19px; border-bottom: 1px solid #424650; }
.crumb { height: 42px; flex: none; display: flex; align-items: center; justify-content: flex-end; gap: 22px; padding-right: 23px; border-bottom: 1px solid #c6c6cd; color: #424650; }
.body { flex: 1; display: flex; min-height: 0; }
.leftnav { width: 241px; flex: none; border-right: 1px solid #b9bdc4; display: flex; flex-direction: column; justify-content: flex-end; padding: 0 0 8px 10px; position: relative; color: #424650; font-size: 13px; }
.sec { height: 28px; display: flex; align-items: center; gap: 8px; font-size: 16px; font-weight: 700; color: #0f141a; }
.gap { margin-top: 8px; }
.item { height: 28px; padding-left: 18px; display: flex; align-items: center; }
.sec + .item { margin-top: 1px; }
.navdown { position: absolute; right: 3px; bottom: 4px; color: #555; }
.content { flex: 1; background: #fbfbfb; padding: 4px 16px 0; display: flex; flex-direction: column; min-width: 0; }
.flash { height: 62px; flex: none; background: #00802f; border-radius: 12px; color: #dcebe0; display: flex; justify-content: flex-end; padding: 11px 19px; position: relative; z-index: 1; box-shadow: 0 4px 10px rgba(0,0,0,.12); }
.actions { align-self: flex-end; width: 105px; height: 32px; margin-top: -11px; flex: none; border: 2px solid #006ce0; border-radius: 16px; color: #006ce0; font-weight: 700; font-size: 13px; display: flex; align-items: center; gap: 11px; padding: 4px 0 0 15px; }
.details { height: 180px; margin-top: 17px; flex: none; border: 1px solid #c6c6cd; border-radius: 16px; background: #fff; display: flex; flex-direction: column; align-items: flex-end; padding: 46px 23px 0; font-size: 13.500px; }
.lbl { margin-right: 134px; color: #0f141a; }
.link { display: flex; align-items: center; gap: 5px; color: #006ce0; }
.link u { text-underline-offset: 3px; }
.ttabs { height: 55px; flex: none; border-bottom: 1px solid #c6c6cd; padding: 25px 0 0 683px; font-size: 15.500px; color: #424650; }
.rules { margin-top: 32px; height: 160px; flex: none; border: 1px solid #c6c6cd; border-radius: 16px; background: #fff; overflow: hidden; display: flex; flex-direction: column; font-size: 13px; }
.rhead { height: 43px; flex: none; display: flex; justify-content: flex-end; padding: 12px 20px 0 0; }
.pill { height: 28px; border: 2px solid #006ce0; border-radius: 14px; width: 157px; display: flex; align-items: center; justify-content: center; font-weight: 700; color: #006ce0; }
.rsearch { height: 33px; flex: none; display: flex; padding-left: 20px; margin-top: -3px; }
.box { width: 648px; height: 32px; border: 1px solid #8c8c94; border-radius: 8px; display: flex; align-items: center; gap: 9px; padding: 6px 0 0 12px; color: #656871; font-size: 13.500px; }
.pager { margin-left: 62px; display: flex; align-items: center; color: #b4b4bb; padding-top: 4px; height: 32px; }
.pager b { margin: 0 18px 0 19px; width: 10px; text-align: center; color: #0f141a; }
.pager s { width: 1px; height: 28px; background: #c6c6cd; margin: 0 14px 0 14px; }
.gear { color: #424650; }
.row { display: flex; margin-left: 21px; flex: none; align-items: center; }
.th { height: 33px; border-bottom: 1px solid #c6c6cd; font-weight: 700; color: #424650; padding-top: 4px; }
.td { height: 33px; color: #0f141a; margin-top: -1px; }
.ck { width: 39px; padding-left: 12px; flex: none; display: flex; height: 18px; align-items: center; }
.th .ck { border-right: 2px solid #b4b4bb; }
.ck em, .cb { display: block; width: 16px; height: 16px; border: 1px solid #8c8c94; border-radius: 3px; background: #fff; flex: none; }
.cell { width: 200px; flex: none; padding: 0 14px 0 16px; display: flex; justify-content: space-between; align-items: center; height: 18px; }
.cell:nth-child(2) { width: 180px; }
.th .cell { border-right: 2px solid #8c8c94; padding-right: 12px; }
.hscroll { display: flex; align-items: center; padding: 0 3px; margin-top: 5px; height: 14px; color: #444; }
.hscroll b { width: 436px; height: 7px; border-radius: 4px; background: #d0dbe5; margin-left: 3px; }
.l { transform: rotate(90deg); color: #aaa; }
.r { transform: rotate(-90deg); margin-left: auto; }
.up { transform: rotate(180deg); }
.vscroll { width: 15px; flex: none; background: #fff; display: flex; flex-direction: column; align-items: center; padding: 4px 0; color: #555; }
.vscroll b { flex: 1; width: 7px; border-radius: 4px; background: #d0dbe5; margin: 19px 0 17px; }
.foot { height: 35px; flex: none; background: #161d26; border-top: 1px solid #424650; color: #fff; font-size: 11.500px; display: flex; align-items: center; padding: 0 16px 0 16px; }
.foot > span { margin-left: 25px; }
.foot > .ico + span { margin-left: 5px; }
.foot .copy { margin-left: auto; margin-right: 5px; color: #c6c6cd; }

.shutter { position: absolute; z-index: 2; left: 120px; top: 77px; width: 962px; height: 537px; background: #fafafa; border-radius: 12px 12px 0 0; box-shadow: 0 0 0 1px rgba(0,0,0,.4), 0 3px 20px 2px rgba(0,0,0,.5); display: flex; flex-direction: column; overflow: hidden; }
.title { height: 37px; flex: none; background: #ebebeb; border-bottom: 1px solid #bdbdbd; box-shadow: inset 0 1px #fff; display: flex; align-items: center; padding-left: 275px; font-size: 14px; }
.title b { flex: none; }
.wbtns { margin-left: auto; display: flex; gap: 12px; padding-right: 7px; }
.wbtns i { width: 22px; height: 22px; border-radius: 11px; background: #dadada; display: flex; align-items: center; justify-content: center; }
.wbtns em { width: 8px; height: 8px; border: 1.300px solid #3d3d3d; }
.menu { height: 25px; flex: none; padding: 1px 0 0 8px; display: flex; align-items: center; border-bottom: 1px solid #dedede; }
.bar2 { height: 43px; flex: none; display: grid; grid-template-columns: 54px 132px 119px 36px 117px 36px 46px 37px 49px 30px 76px 82px 108px 34px; align-items: center; border-bottom: 1px solid #c4c4c4; }
.mid { display: flex; align-items: center; justify-content: center; }
.refresh { height: 34px; border-right: 1px solid #dadada; padding-right: 3px; }
.tb { display: flex; align-items: center; gap: 12px; }
.sel { padding-left: 16px; color: #9c9c9c; }
.desk { height: 34px; background: #e5e5e5; border: 1px solid #c6c6c6; border-radius: 6px; padding-left: 8px; }
.win { padding-left: 11px; color: #9c9c9c; gap: 13px; }
.exp { padding-left: 11px; gap: 16px; }
.dim { color: #a6a6a6; }
.stabs { height: 37px; flex: none; display: flex; border-bottom: 1px solid #c4c4c4; }
.nav { width: 24px; }
.stab { width: 299px; margin-right: 8px; display: flex; align-items: center; padding: 0 12px 0 14px; }
.stab span { margin-left: 21px; }
.stab .x { margin-left: auto; }
.stab.on { box-shadow: inset 0 -3px #e95420; margin-right: 0; }
.canvas { flex: 1; display: flex; padding-left: 209px; overflow: hidden; }
.frame { width: 544px; height: 348px; overflow: hidden; }
.mini { width: 1210px; height: 773px; transform: scale(.4496); transform-origin: 0 0; position: relative; }
.mini .side { margin-left: 1px; }
.mini .group { margin-left: 5px; }
.mini .tab { font-size: 15px; font-weight: 500; }
.mini .tab.on { margin-left: 1px; }
.mini .wm { gap: 22px; padding-right: 12px; }
.mini .rs { margin-left: 34px; }
.addr { justify-content: flex-start; padding-left: 13px; font-size: 14.500px; gap: 15px; }
.addr .dim { margin-left: 10px; }
.addr > .ico:nth-child(3) { margin-left: 5px; }
.addr .wr { margin-left: 5px; }
.ns { margin-left: -7px; color: #555; }
.ip { font-size: 15.500px; margin-left: -4px; }
.arr { margin-right: auto; margin-left: 2px; }
.err { flex: 1; margin: 4px 1px 1px 0; background: #fff; border-radius: 8px; display: flex; font: 14px/22px "Liberation Sans", sans-serif; color: #101014; --hole: #fff; overflow: hidden; }
.elogo { margin: 34px 23px 0 307px; }
.etext { flex: 1; padding-top: 56px; }
.etext h1 { margin: 0 0 20px; font-size: 31.500px; line-height: 40px; display: inline-block; white-space: nowrap; vertical-align: top; }
.etext p { margin: 0 0 .5px; height: 22px; white-space: nowrap; }
.etext span, .etext .k { display: inline-block; }
.etext .k { font-size: 15.700px; }
.etext .m { margin-top: 23.400px; }
.etext .s { margin-top: 15.500px; }
.etext .t { margin-top: 3px; }
.li { display: flex; align-items: center; gap: 5px; padding-left: 21px; }
.mark { position: absolute; left: 253px; top: 95px; width: 788px; height: 386px; border: 3px solid #f00; background: rgba(0,0,255,.25); }
.status { height: 47px; flex: none; border-top: 1px solid #c4c4c4; display: flex; align-items: center; padding: 0 10px 0 15px; }
.status > span, .grp > span { flex: none; }
.cb { margin-left: auto; border-color: #b8b8b8; }
.inc { margin-left: 4px; margin-right: 9px; }
.grp { display: flex; align-items: center; height: 34px; border-left: 1px solid #dadada; flex: none; }
.d1 { padding-left: 5px; width: 174px; gap: 2px; }
.d2 { padding-left: 8px; gap: 2px; }
.spin, .pick { height: 34px; border: 1px solid #c6c6c6; border-radius: 6px; background: #fff; display: flex; align-items: center; color: #111; }
.spin { width: 119px; }
.spin span { width: 46px; padding-left: 8px; }
.spin u { width: 35px; height: 32px; border-left: 1px solid #e2e2e2; text-align: center; text-decoration: none; line-height: 30px; font-size: 21px; font-weight: 300; color: #d0d0d0; }
.spin .pl { color: #3d3d3d; }
.pick { width: 47px; padding-left: 11px; gap: 4px; color: #3d3d3d; }
</style>
